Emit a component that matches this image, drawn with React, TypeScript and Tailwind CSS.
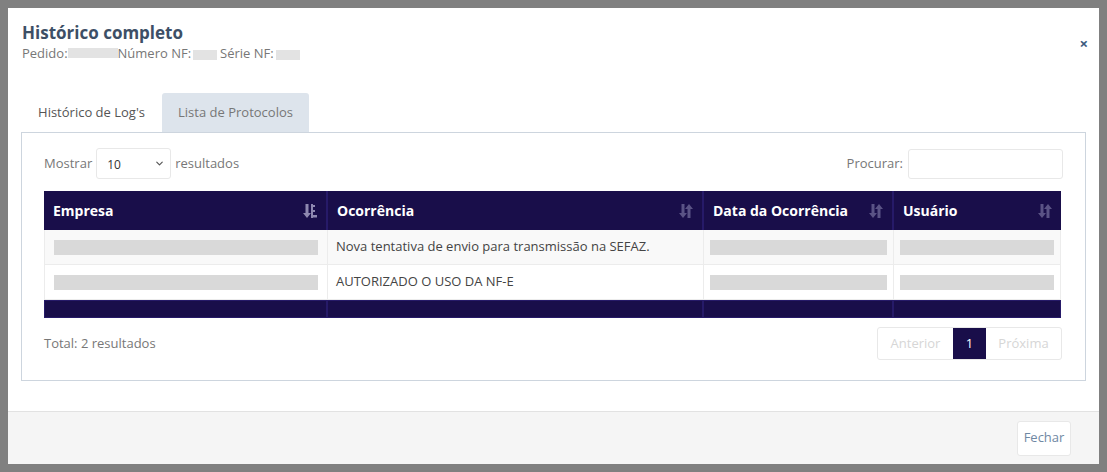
import { ChevronDown } from "lucide-react";

const Bar = ({ w, h = 10 }: { w: number; h?: number }) => (
  <span className="inline-block bg-[#e3e3e3] align-middle" style={{ width: w, height: h }} />
);

const SortBoth = () => (
  <svg width="14" height="16" viewBox="0 0 14 16" className="text-[#5a5385]">
    <path d="M2.5 1h3v9h2.5l-4 5-4-5h2.5z" fill="currentColor" />
    <path d="M11.5 15h-3V6H6l4-5 4 5h-2.5z" fill="currentColor" />
  </svg>
);

const SortAsc = () => (
  <svg width="14" height="16" viewBox="0 0 14 16" className="text-[#8e88b0]">
    <path d="M2.5 1h3v9h2.5l-4 5-4-5h2.5z" fill="currentColor" />
    <rect x="8" y="1" width="2" height="14" fill="currentColor" />
    <rect x="8" y="2" width="4" height="2" fill="currentColor" />
    <rect x="8" y="7" width="4" height="2" fill="currentColor" />
    <rect x="8" y="12" width="6" height="2.5" fill="currentColor" />
  </svg>
);

const cols = [
  { label: "Empresa", w: "w-[282px]", icon: <SortAsc /> },
  { label: "Ocorrência", w: "w-[376px]", icon: <SortBoth /> },
  { label: "Data da Ocorrência", w: "w-[190px]", icon: <SortBoth /> },
  { label: "Usuário", w: "flex-1", icon: <SortBoth /> },
];

const rows = [
  { text: "Nova tentativa de envio para transmissão na SEFAZ.", bg: "bg-[#f9f9f9]" },
  { text: "AUTORIZADO O USO DA NF-E", bg: "bg-white" },
];

const Placeholder = () => <div className="h-[15px] bg-[#d9d9d9] w-full" />;

export default function App() {
  return (
    <div className="w-[1107px] h-[472px] bg-[#808080] pt-2 pl-2 font-['Open_Sans',sans-serif] overflow-hidden">
      <div className="w-[1091px] h-[456px] bg-white flex flex-col">
        {/* Header */}
        <div className="flex justify-between pl-[14px] pr-[11px] pt-[14px]">
          <div>
            <h1 className="text-[17px] font-bold text-[#3d4f66] leading-[22px]">Histórico completo</h1>
            <div className="text-[13px] text-[#777] leading-[18px] flex items-center">
              <span>Pedido:</span>
              <Bar w={50} />
              <span>Número NF:</span>
              <span className="ml-[2px]"><Bar w={24} /></span>
              <span className="ml-[3px]">Série NF:</span>
              <span className="ml-[2px]"><Bar w={24} /></span>
            </div>
          </div>
          <span className="mt-[14px] text-[15px] font-bold text-[#3c5a80] leading-none">×</span>
        </div>

        {/* Tabs */}
        <div className="mx-[13px] mt-[31px]">
          <div className="flex h-[39px] text-[13px]">
            <div className="w-[141px] flex items-center justify-center text-[#555] bg-white">Histórico de Log's</div>
            <div className="w-[147px] flex items-center justify-center text-[#777] bg-[#dde4ec] rounded-t-[3px]">
              Lista de Protocolos
            </div>
          </div>
          <div className="border border-[#cdd5de] h-[249px] px-[22px] pt-[15px]">
            <div className="flex justify-between items-center text-[13px] text-[#777]">
              <div className="flex items-center gap-[4px]">
                <span>Mostrar</span>
                <div className="w-[75px] h-[31px] border border-[#e8e8e8] rounded-[3px] flex items-center justify-between pl-[10px] pr-[5px] text-[12px] text-[#333]">
                  <span className="mt-[2px]">10</span>
                  <ChevronDown size={11} strokeWidth={2.5} className="text-[#555]" />
                </div>
                <span>resultados</span>
              </div>
              <div className="flex items-center gap-[5px]">
                <span>Procurar:</span>
                <div className="w-[155px] h-[30px] border border-[#e8e8e8] rounded-[3px]" />
              </div>
            </div>

            {/* Table */}
            <div className="mt-[12px] w-[1017px] text-[13px]">
              <div className="flex h-[39px] bg-[#190e4a] text-white font-bold text-[14px]">
                {cols.map((c, i) => (
                  <div
                    key={c.label}
                    className={`${c.w} flex items-center justify-between pl-[9px] pr-[9px] ${i > 0 ? "border-l-2 border-[#261a68]" : ""}`}
                  >
                    <span>{c.label}</span>
                    {c.icon}
                  </div>
                ))}
              </div>
              {rows.map((r) => (
                <div key={r.text} className={`flex h-[35px] ${r.bg} border-b border-[#ececec] border-x border-x-[#ececec]`}>
                  <div className="w-[282px] px-[9px] flex items-center">
                    <Placeholder />
                  </div>
                  <div className="w-[376px] px-[8px] flex items-center border-l border-[#ececec] text-[#444]">{r.text}</div>
                  <div className="w-[190px] px-[6px] flex items-center border-l border-[#ececec]">
                    <Placeholder />
                  </div>
                  <div className="flex-1 px-[6px] flex items-center border-l border-[#ececec]">
                    <Placeholder />
                  </div>
                </div>
              ))}
              <div className="flex h-[18px] bg-[#190e4a] border border-[#261a68]">
                <div className="w-[281px]" />
                <div className="w-[376px] border-l-2 border-[#261a68]" />
                <div className="w-[190px] border-l-2 border-[#261a68]" />
                <div className="flex-1 border-l-2 border-[#261a68]" />
              </div>
            </div>

            <div className="flex justify-between items-center mt-[9px] w-[1018px]">
              <span className="text-[13px] text-[#777]">Total: 2 resultados</span>
              <div className="flex h-[33px] border border-[#e8e8e8] rounded-[3px] text-[13px] overflow-hidden">
                <div className="w-[75px] flex items-center justify-center text-[#d6d6d6]">Anterior</div>
                <div className="w-[33px] flex items-center justify-center bg-[#190e4a] text-white">1</div>
                <div className="flex-1 w-[75px] flex items-center justify-center text-[#d6d6d6]">Próxima</div>
              </div>
            </div>
          </div>
        </div>

        {/* Footer */}
        <div className="mt-auto h-[53px] bg-[#f5f5f5] border-t border-[#e2e2e2] flex justify-end items-center pr-[28px]">
          <button className="h-[35px] w-[54px] bg-white border border-[#e8e8e8] rounded-[3px] text-[13px] text-[#6f88a3]">
            Fechar
          </button>
        </div>
      </div>
    </div>
  );
}
